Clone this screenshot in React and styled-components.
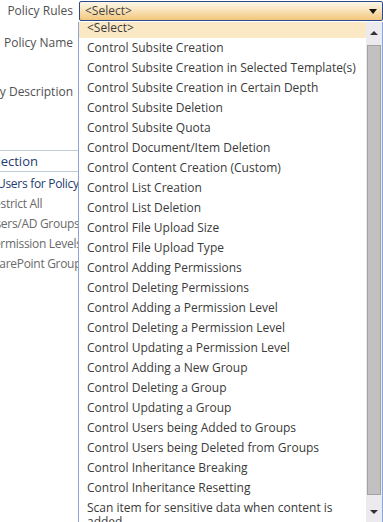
import styled, { createGlobalStyle } from "styled-components"

const GlobalStyle = createGlobalStyle`
  body {
    margin: 0;
    background: #fff;
    font-family: "Open Sans", "Liberation Sans", sans-serif;
    font-size: 12px;
    overflow: hidden;
  }
`

const Page = styled.div`
  position: relative;
  width: 383px;
  height: 522px;
  overflow: hidden;
`

const Form = styled.div`
  display: flex;
  flex-direction: column;
`

const FieldRow = styled.div`
  display: grid;
  grid-template-columns: 73px 1fr;
  column-gap: 6px;
  height: ${(p) => p.$h}px;
  align-items: start;
`

const Label = styled.div`
  display: flex;
  justify-content: flex-end;
  white-space: nowrap;
  color: #505050;
  line-height: 20px;
  margin-top: ${(p) => p.$top || 0}px;
`

const SelectBox = styled.div`
  margin-top: 1px;
  height: 18px;
  border: 1px solid #2b4a8b;
  border-radius: 2px;
  background: linear-gradient(#fdf7ea, #f9e4bb 45%, #f4c67b);
  display: flex;
  align-items: center;
  justify-content: space-between;
  padding: 0 4px 0 5px;
  color: #444;
  line-height: 18px;
`

const Caret = styled.span`
  width: 0;
  height: 0;
  border-left: 4px solid transparent;
  border-right: 4px solid transparent;
  border-top: 5px solid #111;
  margin-right: ${(p) => p.$mr || 0}px;
`

const UpCaret = styled.span`
  width: 0;
  height: 0;
  border-left: 4px solid transparent;
  border-right: 4px solid transparent;
  border-bottom: 4px solid #333;
`

const DownCaret = styled.span`
  width: 0;
  height: 0;
  border-left: 4px solid transparent;
  border-right: 4px solid transparent;
  border-top: 4px solid #333;
`

const Section = styled.div`
  display: flex;
  flex-direction: column;
  width: 78px;
  overflow: hidden;
`

const SectionHeader = styled.div`
  border-top: 1px solid #c3cbd9;
  border-bottom: 1px solid #c3cbd9;
  height: 20px;
  line-height: 20px;
  color: #1f3c6e;
  font-size: 13px;
  white-space: nowrap;
  margin-left: -17px;
`

const SectionBody = styled.div`
  display: flex;
  flex-direction: column;
  padding-top: 2px;
  letter-spacing: -0.3px;
`

const Choice = styled.div`
  height: 20px;
  line-height: 20px;
  white-space: nowrap;
  color: ${(p) => (p.$heading ? "#1f3c6e" : "#6a6a6a")};
  font-size: 12px;
  margin-left: ${(p) => -p.$cut}px;
`

const Dropdown = styled.div`
  position: absolute;
  left: 78px;
  top: 22px;
  width: 303px;
  height: 500px;
  border-left: 1px solid #8ba6d6;
  border-right: 1px solid #8ba6d6;
  background: #fff;
  display: flex;
`

const Options = styled.div`
  flex: 1;
  overflow: hidden;
`

const OptionList = styled.div`
  margin-top: -4px;
  display: flex;
  flex-direction: column;
`

const Option = styled.div`
  padding: 3px 8px;
  line-height: 14px;
  color: #3a3a3a;
  background: ${(p) => (p.$active ? "#fbe9c6" : "transparent")};
`

const Scrollbar = styled.div`
  width: 16px;
  background: #ebeaee;
  display: flex;
  flex-direction: column;
  align-items: center;
`

const ScrollButton = styled.div`
  height: ${(p) => p.$h}px;
  display: flex;
  align-items: center;
  justify-content: center;
`

const Thumb = styled.div`
  margin-top: 2px;
  width: 12px;
  height: 448px;
  background: #c1c1c1;
  border: 1px solid #a3a3a3;
`

const Spacer = styled.div`
  flex: 1;
`

const options = [
  "<Select>",
  "Control Subsite Creation",
  "Control Subsite Creation in Selected Template(s)",
  "Control Subsite Creation in Certain Depth",
  "Control Subsite Deletion",
  "Control Subsite Quota",
  "Control Document/Item Deletion",
  "Control Content Creation (Custom)",
  "Control List Creation",
  "Control List Deletion",
  "Control File Upload Size",
  "Control File Upload Type",
  "Control Adding Permissions",
  "Control Deleting Permissions",
  "Control Adding a Permission Level",
  "Control Deleting a Permission Level",
  "Control Updating a Permission Level",
  "Control Adding a New Group",
  "Control Deleting a Group",
  "Control Updating a Group",
  "Control Users being Added to Groups",
  "Control Users being Deleted from Groups",
  "Control Inheritance Breaking",
  "Control Inheritance Resetting",
  "Scan item for sensitive data when content is added",
]

const choices = [
  { text: "Users for Policy", cut: 3, heading: true },
  { text: "Restrict All", cut: 13 },
  { text: "Users/AD Groups", cut: 13 },
  { text: "Permission Levels", cut: 13 },
  { text: "SharePoint Groups", cut: 14 },
]

const App = () => {
  return (
    <Page>
      <GlobalStyle />
      <Form>
        <FieldRow $h={32}>
          <Label $top={1}>Policy Rules</Label>
          <SelectBox>
            <span>&lt;Select&gt;</span>
            <Caret $mr={1} />
          </SelectBox>
        </FieldRow>
        <FieldRow $h={48}>
          <Label $top={1}>Policy Name</Label>
        </FieldRow>
        <FieldRow $h={70}>
          <Label $top={2}>Policy Description</Label>
        </FieldRow>
        <Section>
          <SectionHeader>Selection</SectionHeader>
          <SectionBody>
            {choices.map((c) => (
              <Choice key={c.text} $cut={c.cut} $heading={c.heading}>
                {c.text}
              </Choice>
            ))}
          </SectionBody>
        </Section>
      </Form>

      <Dropdown>
        <Options>
          <OptionList>
            {options.map((o, i) => (
              <Option key={o} $active={i === 0}>
                {o}
              </Option>
            ))}
          </OptionList>
        </Options>
        <Scrollbar>
          <ScrollButton $h={21}>
            <UpCaret />
          </ScrollButton>
          <Thumb />
          <Spacer />
          <ScrollButton $h={20}>
            <DownCaret />
          </ScrollButton>
        </Scrollbar>
      </Dropdown>
    </Page>
  )
}

export default App
